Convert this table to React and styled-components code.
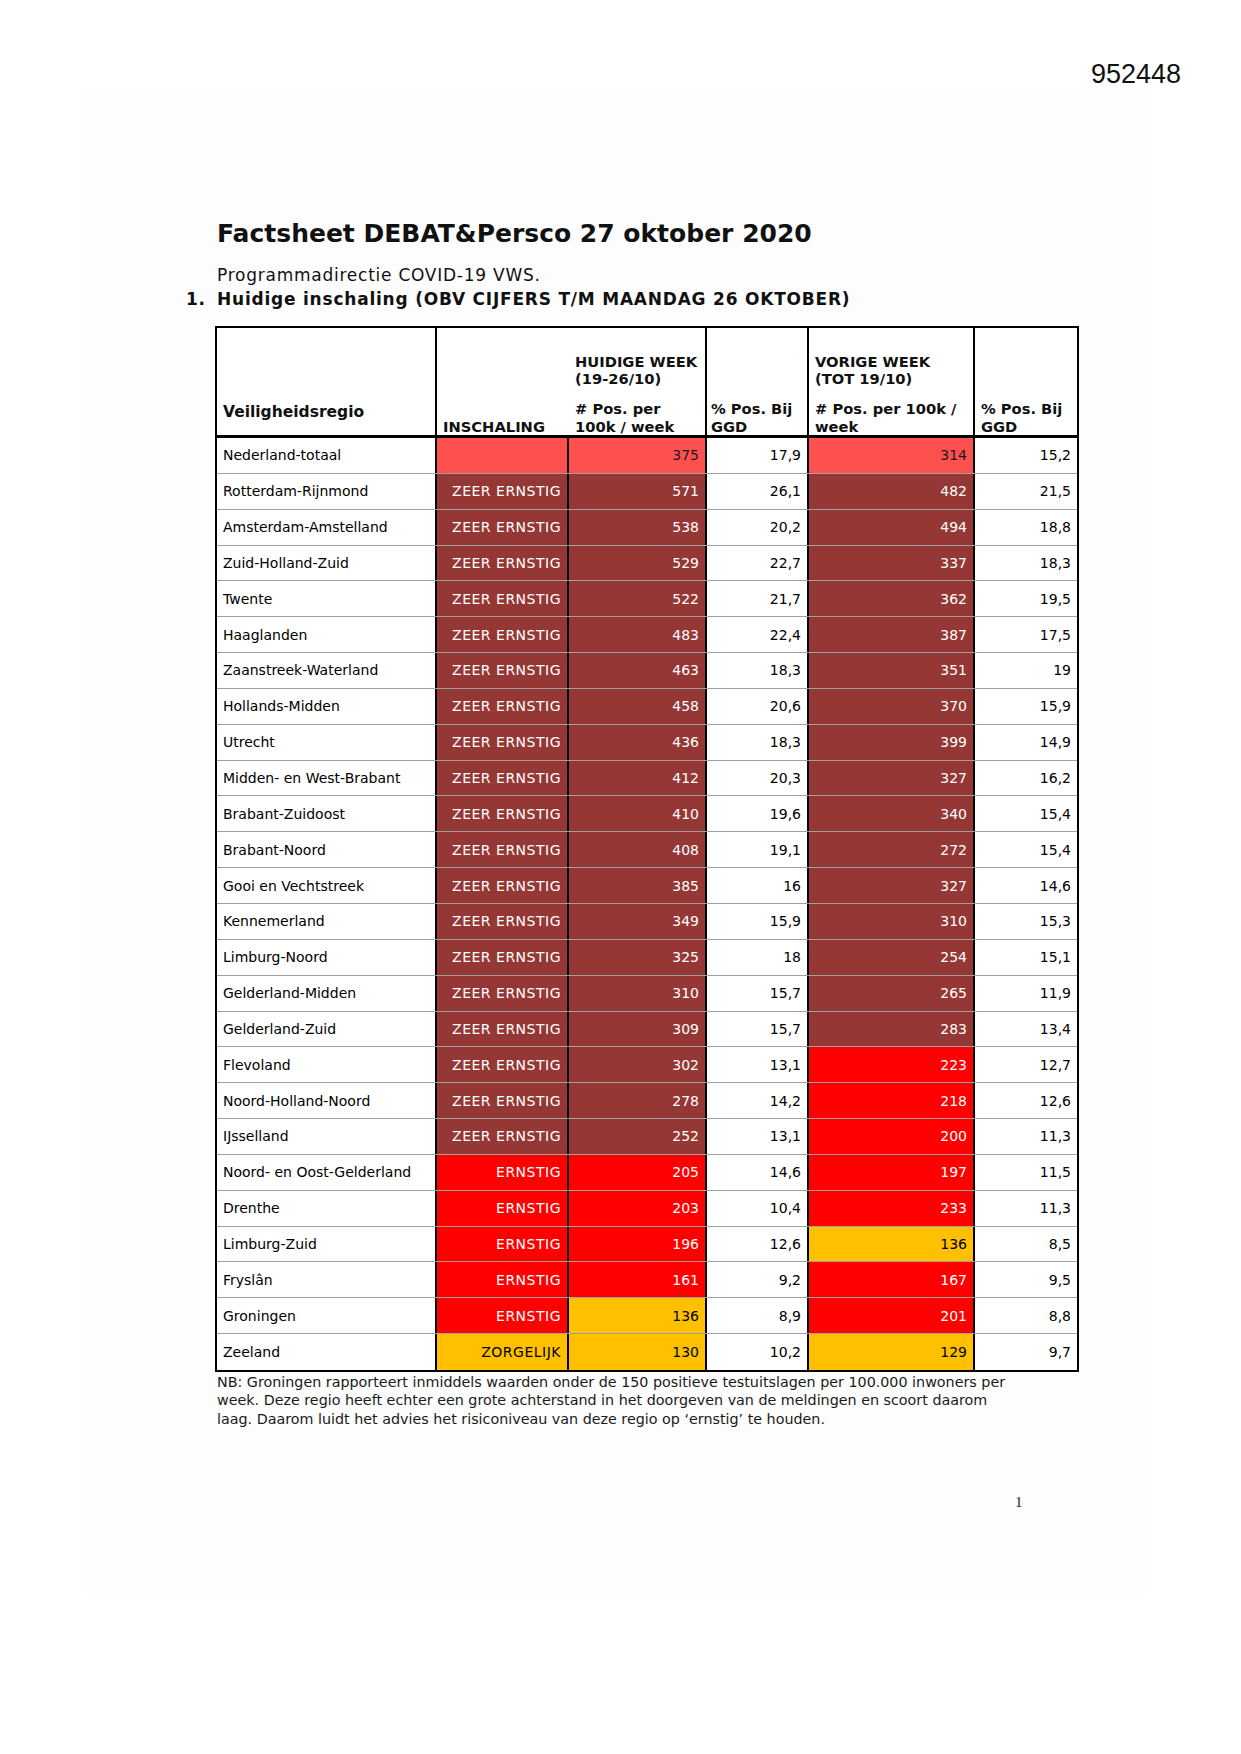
import React from 'react';
import styled, { createGlobalStyle } from 'styled-components';

const Global = createGlobalStyle`
  html, body { margin: 0; padding: 0; background: #fff; }
  body { font-family: "DejaVu Sans", Verdana, sans-serif; color: #000; }
`;

const COLORS = {
  none: { bg: '#ffffff', fg: '#000000' },
  light: { bg: '#ff5050', fg: '#1a1a1a' },
  dark: { bg: '#953735', fg: '#ffffff' },
  red: { bg: '#ff0000', fg: '#ffffff' },
  yellow: { bg: '#ffc000', fg: '#000000' },
};

const COLS = '220px 132px 138px 102px 166px 102px';

const Page = styled.div`
  width: 1241px;
  height: 1754px;
  overflow: hidden;
  background: #fff;
`;

const TopBar = styled.div`
  height: 88px;
  box-sizing: border-box;
  padding: 61px 60px 0 0;
  display: flex;
  justify-content: flex-end;
`;

const DocNumber = styled.div`
  font-family: "Liberation Sans", Arial, sans-serif;
  font-size: 27px;
  line-height: 27px;
  color: #111;
`;

const Sheet = styled.div`
  margin-left: 87px;
  width: 1061px;
  height: 1505px;
  background: #fdfdfd;
  box-sizing: border-box;
  padding: 131px 0 0 128px;
  display: flex;
  flex-direction: column;
`;

const Title = styled.h1`
  margin: 0 0 0 2px;
  font-size: 25px;
  line-height: 30px;
  font-weight: bold;
  color: #111;
`;

const Subtitle = styled.div`
  margin: 16px 0 0 2px;
  font-size: 17px;
  line-height: 20px;
  letter-spacing: 0.75px;
  color: #111;
`;

const Heading = styled.div`
  margin: 4px 0 0 2px;
  display: flex;
  font-size: 17px;
  line-height: 20px;
  font-weight: bold;
  letter-spacing: 0.78px;
  color: #111;
`;

const HeadingNum = styled.span`
  width: 31px;
  margin-left: -31px;
`;

const Table = styled.div`
  margin-top: 17px;
  width: 864px;
  box-sizing: border-box;
  border: 2px solid #000;
  background: #fff;
`;

const HeaderRow = styled.div`
  display: grid;
  grid-template-columns: ${COLS};
  height: 110px;
  box-sizing: border-box;
  border-bottom: 3px solid #000;
`;

const HeadCell = styled.div`
  display: flex;
  flex-direction: column;
  justify-content: flex-end;
  padding: 0 ${(p) => p.$padX ?? 6}px;
  border-right: ${(p) => (p.$noRight ? 'none' : '2px solid #000')};
  font-weight: bold;
  line-height: 17.5px;
  color: #111;
`;

const HeadBlock = styled.div`
  margin-bottom: ${(p) => p.$mb ?? 0}px;
  & + & { margin-top: 12.5px; }
  font-size: ${(p) => p.$size ?? 14.7}px;
  white-space: nowrap;
`;

const Row = styled.div`
  display: grid;
  grid-template-columns: ${COLS};
  height: 35.85px;
  box-sizing: border-box;
  border-bottom: ${(p) => (p.$last ? 'none' : '1px solid #a0a0a0')};
`;

const Cell = styled.div`
  display: flex;
  align-items: center;
  justify-content: ${(p) => (p.$left ? 'flex-start' : 'flex-end')};
  padding: 0 6px;
  border-right: ${(p) => (p.$noRight ? 'none' : '2px solid #000')};
  background: ${(p) => COLORS[p.$tone || 'none'].bg};
  color: ${(p) => COLORS[p.$tone || 'none'].fg};
  font-size: 14px;
  letter-spacing: ${(p) => (p.$caps ? 0.5 : 0)}px;
  white-space: nowrap;
  overflow: hidden;
`;

const Footnote = styled.p`
  margin: 1px 0 0 2px;
  font-size: 14.3px;
  line-height: 18.5px;
  color: #1a1a1a;
`;

const PageNumber = styled.div`
  margin-top: 66px;
  padding-left: 800px;
  font-family: "Liberation Serif", "Times New Roman", serif;
  font-size: 15px;
  color: #222;
`;

const Z = 'ZEER ERNSTIG';
const E = 'ERNSTIG';

const rows = [
  ['Nederland-totaal', '', 'light', '375', 'light', '17,9', '314', 'light', '15,2'],
  ['Rotterdam-Rijnmond', Z, 'dark', '571', 'dark', '26,1', '482', 'dark', '21,5'],
  ['Amsterdam-Amstelland', Z, 'dark', '538', 'dark', '20,2', '494', 'dark', '18,8'],
  ['Zuid-Holland-Zuid', Z, 'dark', '529', 'dark', '22,7', '337', 'dark', '18,3'],
  ['Twente', Z, 'dark', '522', 'dark', '21,7', '362', 'dark', '19,5'],
  ['Haaglanden', Z, 'dark', '483', 'dark', '22,4', '387', 'dark', '17,5'],
  ['Zaanstreek-Waterland', Z, 'dark', '463', 'dark', '18,3', '351', 'dark', '19'],
  ['Hollands-Midden', Z, 'dark', '458', 'dark', '20,6', '370', 'dark', '15,9'],
  ['Utrecht', Z, 'dark', '436', 'dark', '18,3', '399', 'dark', '14,9'],
  ['Midden- en West-Brabant', Z, 'dark', '412', 'dark', '20,3', '327', 'dark', '16,2'],
  ['Brabant-Zuidoost', Z, 'dark', '410', 'dark', '19,6', '340', 'dark', '15,4'],
  ['Brabant-Noord', Z, 'dark', '408', 'dark', '19,1', '272', 'dark', '15,4'],
  ['Gooi en Vechtstreek', Z, 'dark', '385', 'dark', '16', '327', 'dark', '14,6'],
  ['Kennemerland', Z, 'dark', '349', 'dark', '15,9', '310', 'dark', '15,3'],
  ['Limburg-Noord', Z, 'dark', '325', 'dark', '18', '254', 'dark', '15,1'],
  ['Gelderland-Midden', Z, 'dark', '310', 'dark', '15,7', '265', 'dark', '11,9'],
  ['Gelderland-Zuid', Z, 'dark', '309', 'dark', '15,7', '283', 'dark', '13,4'],
  ['Flevoland', Z, 'dark', '302', 'dark', '13,1', '223', 'red', '12,7'],
  ['Noord-Holland-Noord', Z, 'dark', '278', 'dark', '14,2', '218', 'red', '12,6'],
  ['IJsselland', Z, 'dark', '252', 'dark', '13,1', '200', 'red', '11,3'],
  ['Noord- en Oost-Gelderland', E, 'red', '205', 'red', '14,6', '197', 'red', '11,5'],
  ['Drenthe', E, 'red', '203', 'red', '10,4', '233', 'red', '11,3'],
  ['Limburg-Zuid', E, 'red', '196', 'red', '12,6', '136', 'yellow', '8,5'],
  ['Fryslân', E, 'red', '161', 'red', '9,2', '167', 'red', '9,5'],
  ['Groningen', E, 'red', '136', 'yellow', '8,9', '201', 'red', '8,8'],
  ['Zeeland', 'ZORGELIJK', 'yellow', '130', 'yellow', '10,2', '129', 'yellow', '9,7'],
];

export default function App() {
  return (
    <Page>
      <Global />
      <TopBar>
        <DocNumber>952448</DocNumber>
      </TopBar>
      <Sheet>
        <Title>Factsheet DEBAT&amp;Persco 27 oktober 2020</Title>
        <Subtitle>Programmadirectie COVID-19 VWS.</Subtitle>
        <Heading>
          <HeadingNum>1.</HeadingNum>
          <span>Huidige inschaling (OBV CIJFERS T/M MAANDAG 26 OKTOBER)</span>
        </Heading>
        <Table>
          <HeaderRow>
            <HeadCell>
              <HeadBlock $size={15.5} $mb={14}>Veiligheidsregio</HeadBlock>
            </HeadCell>
            <HeadCell $noRight>
              <HeadBlock>INSCHALING</HeadBlock>
            </HeadCell>
            <HeadCell>
              <HeadBlock>HUIDIGE WEEK<br />(19-26/10)</HeadBlock>
              <HeadBlock>#&nbsp;Pos. per<br />100k / week</HeadBlock>
            </HeadCell>
            <HeadCell $padX={4}>
              <HeadBlock>% Pos. Bij<br />GGD</HeadBlock>
            </HeadCell>
            <HeadCell>
              <HeadBlock>VORIGE WEEK<br />(TOT 19/10)</HeadBlock>
              <HeadBlock># Pos. per 100k /<br />week</HeadBlock>
            </HeadCell>
            <HeadCell $noRight>
              <HeadBlock>% Pos. Bij<br />GGD</HeadBlock>
            </HeadCell>
          </HeaderRow>
          {rows.map((r, i) => (
            <Row key={r[0]} $last={i === rows.length - 1}>
              <Cell $left>{r[0]}</Cell>
              <Cell $tone={r[2]} $caps>{r[1]}</Cell>
              <Cell $tone={r[4]}>{r[3]}</Cell>
              <Cell>{r[5]}</Cell>
              <Cell $tone={r[7]}>{r[6]}</Cell>
              <Cell $noRight>{r[8]}</Cell>
            </Row>
          ))}
        </Table>
        <Footnote>
          NB: Groningen rapporteert inmiddels waarden onder de 150 positieve testuitslagen per 100.000 inwoners per
          <br />
          week. Deze regio heeft echter een grote achterstand in het doorgeven van de meldingen en scoort daarom
          <br />
          laag. Daarom luidt het advies het risiconiveau van deze regio op ‘ernstig’ te houden.
        </Footnote>
        <PageNumber>1</PageNumber>
      </Sheet>
    </Page>
  );
}
